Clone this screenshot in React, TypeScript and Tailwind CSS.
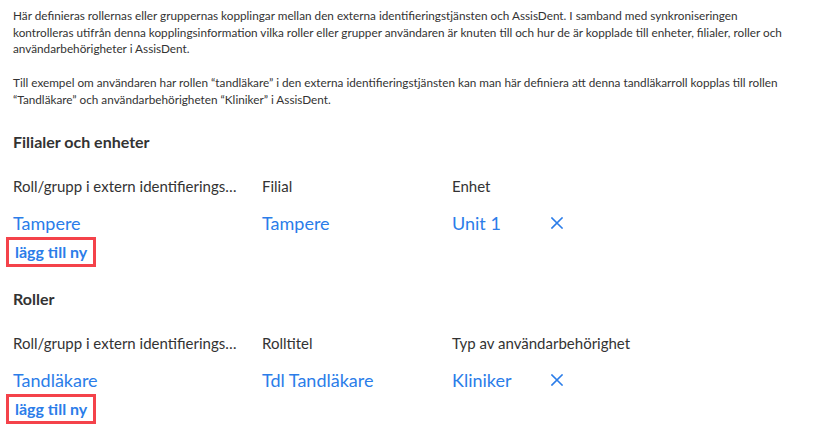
import React from 'react';

interface Row {
  a: string;
  b: string;
  c: string;
}

interface SectionProps {
  title: string;
  headers: [string, string, string];
  rows: Row[];
}

const CloseIcon = () => (
  <svg width="12" height="12" viewBox="0 0 12 12" className="text-[#2b7de9]">
    <path d="M1 1 L11 11 M11 1 L1 11" stroke="currentColor" strokeWidth="1.6" strokeLinecap="square" />
  </svg>
);

const Section: React.FC<SectionProps> = ({ title, headers, rows }) => (
  <div>
    <h2 className="text-[16px] font-bold text-[#333] leading-[20px]">{title}</h2>
    <div className="grid grid-cols-[249px_190px_99px_20px] mt-[24px] text-[15px] leading-[20px] text-[#333]">
      <div className="truncate pr-[24px]">{headers[0]}</div>
      <div>{headers[1]}</div>
      <div className="whitespace-nowrap">{headers[2]}</div>
      <div />
    </div>
    {rows.map((r, i) => (
      <div key={i} className="grid grid-cols-[249px_190px_99px_20px] items-center mt-[15px] text-[18px] leading-[24px] text-[#2b7de9]">
        <div>{r.a}</div>
        <div>{r.b}</div>
        <div>{r.c}</div>
        <div className="flex items-center">
          <CloseIcon />
        </div>
      </div>
    ))}
    <div className="-ml-[7px] mt-[2px] w-fit border-[3px] border-[#f4424a] px-[6px] py-[3px] text-[16px] leading-[18px] font-bold text-[#2b7de9]">
      lägg till ny
    </div>
  </div>
);

export default function App() {
  return (
    <div className="w-[823px] h-[430px] bg-white px-[13px] pt-[8px] font-['Lato',sans-serif] overflow-hidden">
      <div className="text-[11.75px] leading-[16.7px] text-[#333] whitespace-nowrap">
        <p>
          Här definieras rollernas eller gruppernas kopplingar mellan den externa identifieringstjänsten och AssisDent. I samband med synkroniseringen
          <br />
          kontrolleras utifrån denna kopplingsinformation vilka roller eller grupper användaren är knuten till och hur de är kopplade till enheter, filialer, roller och
          <br />
          användarbehörigheter i AssisDent.
        </p>
        <p className="mt-[16.7px]">
          Till exempel om användaren har rollen “tandläkare” i den externa identifieringstjänsten kan man här definiera att denna tandläkarroll kopplas till rollen
          <br />
          “Tandläkare” och användarbehörigheten “Kliniker” i AssisDent.
        </p>
      </div>
      <div className="mt-[24px]">
        <Section
          title="Filialer och enheter"
          headers={['Roll/grupp i extern identifieringstjänst', 'Filial', 'Enhet']}
          rows={[{ a: 'Tampere', b: 'Tampere', c: 'Unit 1' }]}
        />
      </div>
      <div className="mt-[22px]">
        <Section
          title="Roller"
          headers={['Roll/grupp i extern identifieringstjänst', 'Rolltitel', 'Typ av användarbehörighet']}
          rows={[{ a: 'Tandläkare', b: 'Tdl Tandläkare', c: 'Kliniker' }]}
        />
      </div>
    </div>
  );
}
